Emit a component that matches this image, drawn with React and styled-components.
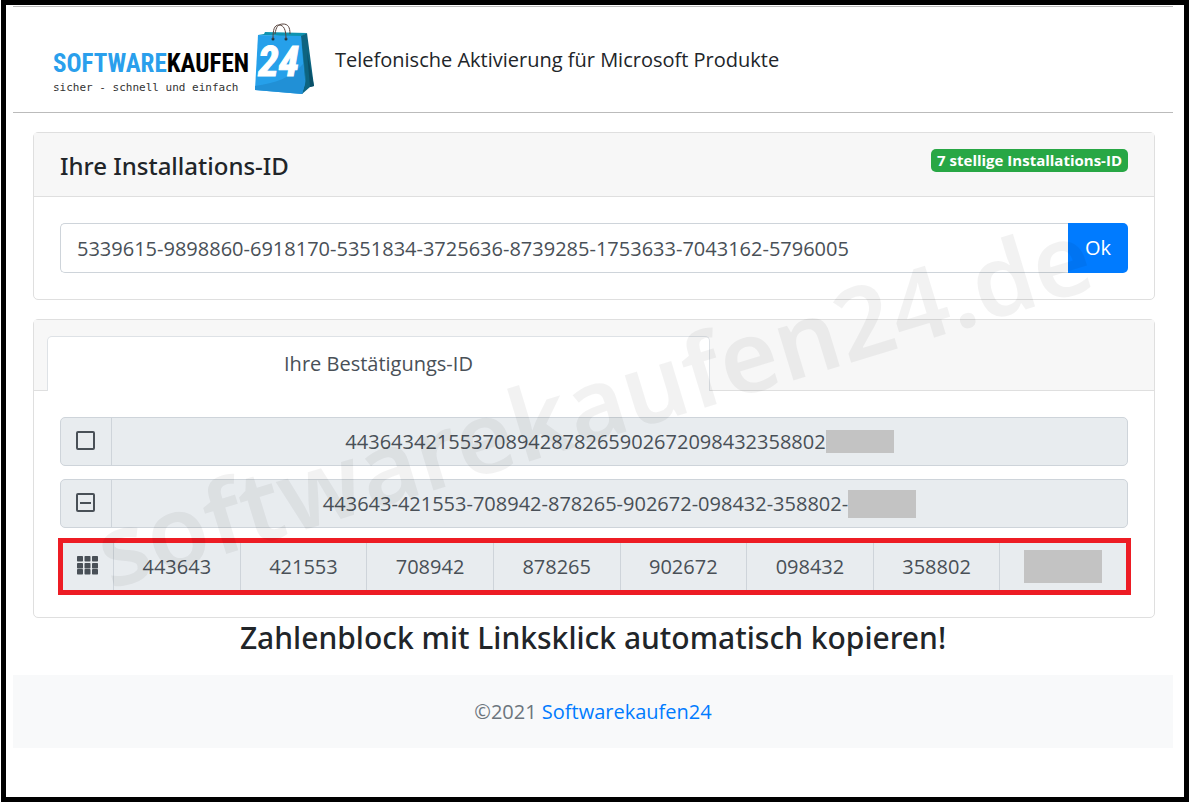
import React, { useState } from "react";
import styled, { createGlobalStyle } from "styled-components";

const groups = ["443643", "421553", "708942", "878265", "902672", "098432", "358802"];

export default function App() {
  const [installationId, setInstallationId] = useState(
    "5339615-9898860-6918170-5351834-3725636-8739285-1753633-7043162-5796005"
  );
  const copy = (text) => navigator.clipboard?.writeText(text);

  return (
    <>
      <GlobalStyle />
      <Page>
        <Header>
          <Brand href="#" aria-label="Softwarekaufen24">
            <Logo />
          </Brand>
          <Tagline>Telefonische Aktivierung für Microsoft Produkte</Tagline>
        </Header>

        <Main>
          <Card>
            <CardHeader>
              <CardTitle>
                <label htmlFor="installation-id">Ihre Installations-ID</label>
              </CardTitle>
              <Badge>7 stellige Installations-ID</Badge>
            </CardHeader>
            <CardBody>
              <InputGroup onSubmit={(e) => e.preventDefault()}>
                <Input
                  id="installation-id"
                  type="text"
                  value={installationId}
                  onChange={(e) => setInstallationId(e.target.value)}
                />
                <SubmitButton type="submit">Ok</SubmitButton>
              </InputGroup>
            </CardBody>
          </Card>

          <Card>
            <TabBar role="tablist">
              <Tab type="button" role="tab" aria-selected="true">
                Ihre Bestätigungs-ID
              </Tab>
            </TabBar>
            <CardBody>
              <CodeRow>
                <IconCell>
                  <SquareIcon />
                </IconCell>
                <CodeButton type="button" onClick={() => copy(groups.join(""))}>
                  {groups.join("")}
                  <Redacted />
                </CodeButton>
              </CodeRow>
              <CodeRow>
                <IconCell>
                  <SquareIcon minus />
                </IconCell>
                <CodeButton type="button" onClick={() => copy(groups.join("-"))}>
                  {groups.join("-")}-
                  <Redacted $tall />
                </CodeButton>
              </CodeRow>
              <CodeRow $marked>
                <IconCell>
                  <GridIcon />
                </IconCell>
                {groups.map((group) => (
                  <CodeButton type="button" key={group} onClick={() => copy(group)}>
                    {group}
                  </CodeButton>
                ))}
                <CodeButton type="button" aria-label="Block 8">
                  <Redacted $block />
                </CodeButton>
              </CodeRow>
            </CardBody>
          </Card>
          <Watermark aria-hidden="true">softwarekaufen24.de</Watermark>
        </Main>

        <Hint>Zahlenblock mit Linksklick automatisch kopieren!</Hint>
        <Footer>
          ©2021 <FooterLink href="#">Softwarekaufen24</FooterLink>
        </Footer>
      </Page>
    </>
  );
}

function Logo() {
  return (
    <svg width="264" height="76" viewBox="0 0 264 76" aria-hidden="true">
      <text x="0" y="50" fontFamily="'Roboto Condensed', 'Liberation Sans Narrow', sans-serif" fontWeight="700" fontSize="25">
        <tspan fill="#2a9fec">SOFTWARE</tspan>
        <tspan fill="#000">KAUFEN</tspan>
      </text>
      <text x="0" y="69" fontFamily="'DejaVu Sans Mono', monospace" fontSize="11" fill="#333">
        sicher - schnell und einfach
      </text>
      <path d="M205 13l6-1 1-2 42 1-6 4z" fill="#0e93b0" />
      <path d="M248 14l6-3 7 53-4 1-8 7z" fill="#0d6480" />
      <path d="M254 30l3 35 4-1z" fill="#0a5068" />
      <path d="M248 14l5 45-4 13z" fill="#1679a5" />
      <path d="M205 13l43 1 4 47-3 11-47-4z" fill="#26a0ea" />
      <path d="M202 64c20-3 36-8 48-22l2 20-3 10-47-4z" fill="#2190d6" />
      <circle cx="220" cy="17" r="1.5" fill="#1c3541" />
      <circle cx="233" cy="17" r="1.5" fill="#1c3541" />
      <path
        d="M220 17c0-9 1-14 6-14 5 0 7 5 7 14M222 12c1-7 3-10 8-10 5 0 7 3 7 10"
        fill="none"
        stroke="#59453f"
        strokeWidth="1"
      />
      <text
        x="205"
        y="54"
        fontFamily="'Roboto Condensed', 'Liberation Sans Narrow', sans-serif"
        fontWeight="700"
        fontStyle="italic"
        fontSize="42"
        fill="#fff"
        stroke="#fff"
      >
        24
      </text>
    </svg>
  );
}

function SquareIcon({ minus }) {
  return (
    <svg width="20" height="20" viewBox="0 0 20 20" fill="none" stroke="currentColor" strokeWidth="2" aria-hidden="true">
      <rect x="1" y="1" width="17" height="17" rx="1" />
      {minus && <path d="M4 10h11" />}
    </svg>
  );
}

function GridIcon() {
  return (
    <svg width="22" height="20" viewBox="0 0 22 20" fill="currentColor" aria-hidden="true">
      {[0, 7, 13].map((y) =>
        [0, 7.5, 15].map((x) => <rect key={`${x}-${y}`} x={x} y={y} width="6" height="5.5" rx="0.7" />)
      )}
    </svg>
  );
}

const GlobalStyle = createGlobalStyle`
  * {
    box-sizing: border-box;
  }
  body {
    margin: 0;
    color: #212529;
    background: #fff;
    font-family: "Open Sans", "Noto Sans", sans-serif;
    font-size: 20px;
    line-height: 30px;
  }
  button, input {
    font: inherit;
  }
`;

const Page = styled.div`
  min-height: calc(100vh - 1px);
  margin: 0 1px;
  padding: 1px 11px 0 7px;
  border: 5px solid #000;
`;

const Header = styled.header`
  display: flex;
  align-items: center;
  gap: 18px;
  height: 107px;
  padding-left: 40px;
  border-top: 1px solid #bbb;
  border-bottom: 1px solid #bbb;
`;

const Brand = styled.a`
  display: flex;
`;

const Tagline = styled.span`
  font-size: 20px;
`;

const Main = styled.main`
  position: relative;
  display: flex;
  flex-direction: column;
  gap: 19px;
  padding: 19px 18px 0 20px;
`;

const Card = styled.section`
  border: 1px solid #dfdfdf;
  border-radius: 5px;
`;

const CardHeader = styled.div`
  display: flex;
  align-items: flex-start;
  justify-content: space-between;
  padding: 16px 26px 15px;
  background: #f7f7f7;
  border-bottom: 1px solid #dfdfdf;
`;

const CardTitle = styled.h1`
  margin: 0;
  font-family: "Noto Sans", sans-serif;
  font-size: 24px;
  font-weight: 500;
  line-height: 34px;
  height: 32px;
`;

const Badge = styled.span`
  padding: 0 6px;
  color: #fff;
  background: #28a745;
  border-radius: 5px;
  font-size: 15px;
  font-weight: 700;
  line-height: 23px;
`;

const CardBody = styled.div`
  display: flex;
  flex-direction: column;
  gap: 13px;
  padding: 26px;
`;

const InputGroup = styled.form`
  display: flex;
`;

const Input = styled.input`
  flex: 1;
  min-width: 0;
  height: 50px;
  padding: 0 16px;
  color: #495057;
  background: #fff;
  border: 1px solid #ced4da;
  border-right: 0;
  border-radius: 5px 0 0 5px;
`;

const SubmitButton = styled.button`
  width: 60px;
  color: #fff;
  background: #007bff;
  border: 0;
  border-radius: 0 5px 5px 0;
  cursor: pointer;
`;

const TabBar = styled.div`
  display: flex;
  padding: 16px 13px 0;
  background: linear-gradient(#dfdfdf, #dfdfdf) bottom / 100% 1px no-repeat #f7f7f7;
`;

const Tab = styled.button`
  width: 60.6%;
  height: 55px;
  color: #495057;
  background: #fff;
  border: 1px solid #dee2e6;
  border-bottom: 0;
  border-radius: 5px 5px 0 0;
`;

const CodeRow = styled.div`
  display: flex;
  height: 49px;
  color: #495057;
  background: #e8ecef;
  border: 1px solid #ced4da;
  border-radius: 5px;
  ${({ $marked }) =>
    $marked &&
    `
    height: 57px;
    margin: -3px -3px -4px -2px;
    border: 5px solid #ed1c24;
    border-radius: 0;
  `}
`;

const IconCell = styled.span`
  display: flex;
  align-items: center;
  justify-content: center;
  width: 50px;
  padding-bottom: 2px;
`;

const CodeButton = styled.button`
  display: flex;
  flex: 1;
  align-items: center;
  justify-content: center;
  padding: 0;
  color: inherit;
  background: none;
  border: 0;
  border-left: 1px solid #ced4da;
  cursor: pointer;
`;

const Redacted = styled.span`
  width: ${({ $block }) => ($block ? 78 : 68)}px;
  height: ${({ $block, $tall }) => ($block ? 33 : $tall ? 28 : 23)}px;
  background: #c3c3c3;
`;

const Watermark = styled.div`
  position: absolute;
  top: 57%;
  left: 50%;
  color: rgba(0, 0, 0, 0.05);
  font-family: "Noto Sans", sans-serif;
  font-size: 100px;
  font-weight: 600;
  line-height: 1;
  transform: translate(-50%, -50%) rotate(-17deg);
  pointer-events: none;
`;

const Hint = styled.h2`
  margin: 0;
  font-family: "Noto Sans", sans-serif;
  font-size: 30px;
  font-weight: 500;
  line-height: 40px;
  text-align: center;
`;

const Footer = styled.footer`
  margin-top: 17px;
  padding: 22px 22px 21px;
  color: #6c757d;
  background: #f8f9fa;
  text-align: center;
`;

const FooterLink = styled.a`
  color: #007bff;
  text-decoration: none;
`;
